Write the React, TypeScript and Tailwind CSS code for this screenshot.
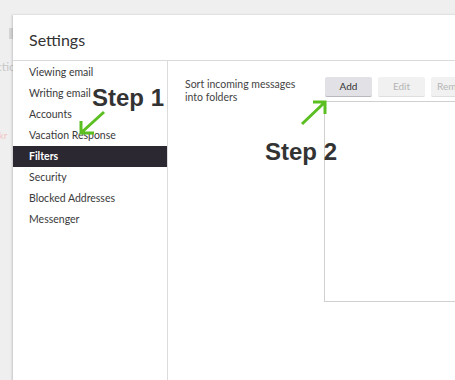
import React from 'react';

const navItems = [
  'Viewing email',
  'Writing email',
  'Accounts',
  'Vacation Response',
  'Filters',
  'Security',
  'Blocked Addresses',
  'Messenger',
];

function Arrow({ d, className }: { d: string; className: string }) {
  return (
    <svg className={className} width="40" height="40" viewBox="0 0 40 40" fill="none">
      <path d={d} stroke="#5bbf21" strokeWidth="3" strokeLinecap="butt" strokeLinejoin="miter" />
    </svg>
  );
}

export default function App() {
  return (
    <div
      className="relative w-[455px] h-[380px] overflow-hidden bg-[#efefef] pt-[15px] pl-[13px]"
      style={{ fontFamily: 'Lato, "Open Sans", sans-serif' }}
    >
      {/* faded page behind the dialog */}
      <div className="absolute left-[-4px] top-[58px] text-[12px] text-[#c8c8c8]">ctio</div>
      <div className="absolute left-[-6px] top-[128px] text-[10px] text-[#f2c4c4]">ckr</div>
      <div className="absolute left-[9px] top-[28px] w-[4px] h-[11px] bg-[#d4d4d4]" />

      <div className="relative w-[460px] h-[380px] bg-white flex flex-col shadow-[-1px_0_2px_rgba(0,0,0,0.18)]">
        <div className="h-[46px] shrink-0 border-b border-[#dadada] flex items-center pl-[16px] pt-[5px]">
          <span className="text-[16px] text-[#333]">Settings</span>
        </div>

        <div className="flex flex-1">
          <nav className="w-[155px] shrink-0 border-r border-[#dcdcdc] pt-[1px]">
            {navItems.map((item) => (
              <div
                key={item}
                className={
                  item === 'Filters'
                    ? 'h-[21px] flex items-center pl-[16px] text-[10.5px] font-bold text-white bg-[#2b2831]'
                    : 'h-[21px] flex items-center pl-[16px] text-[10.5px] text-[#3a3a3a]'
                }
              >
                {item}
              </div>
            ))}
          </nav>

          <div className="flex pt-[16px] pl-[17px]">
            <p className="w-[139px] text-[10.5px] leading-[13px] text-[#444] pt-[1px]">
              Sort incoming messages
              <br />
              into folders
            </p>
            <div className="flex flex-col">
              <div className="flex gap-[6px] pl-[1px]">
                <button className="w-[47px] h-[20px] rounded-[2px] bg-[#e2e2e6] border-b border-[#b9b9bd] text-[10px] text-[#333]">
                  Add
                </button>
                <button className="w-[47px] h-[20px] rounded-[2px] bg-[#f1f1f1] border-b border-[#dedede] text-[10px] text-[#b5b5b5]">
                  Edit
                </button>
                <button className="w-[47px] h-[20px] rounded-[2px] bg-[#f1f1f1] border-b border-[#dedede] text-[10px] text-[#b5b5b5] text-left pl-[6px] whitespace-nowrap overflow-hidden">
                  Remove
                </button>
              </div>
              <div className="mt-[4px] w-[140px] h-[201px] border border-r-0 border-[#d0d0d0]" />
            </div>
          </div>
        </div>
      </div>

      {/* annotations */}
      <div
        className="absolute left-[92px] top-[80px] text-[24px] font-bold text-[#333]"
        style={{ fontFamily: '"Liberation Sans", Arial, sans-serif' }}
      >
        Step 1
      </div>
      <div
        className="absolute left-[265px] top-[134px] text-[24px] font-bold text-[#333]"
        style={{ fontFamily: '"Liberation Sans", Arial, sans-serif' }}
      >
        Step 2
      </div>
      <Arrow className="absolute left-[70px] top-[104px]" d="M34 8 L12 28 M11 17 L11 29 L24 29" />
      <Arrow className="absolute left-[292px] top-[92px]" d="M10 32 L32 11 M21 10 L33 10 L33 22" />
    </div>
  );
}
